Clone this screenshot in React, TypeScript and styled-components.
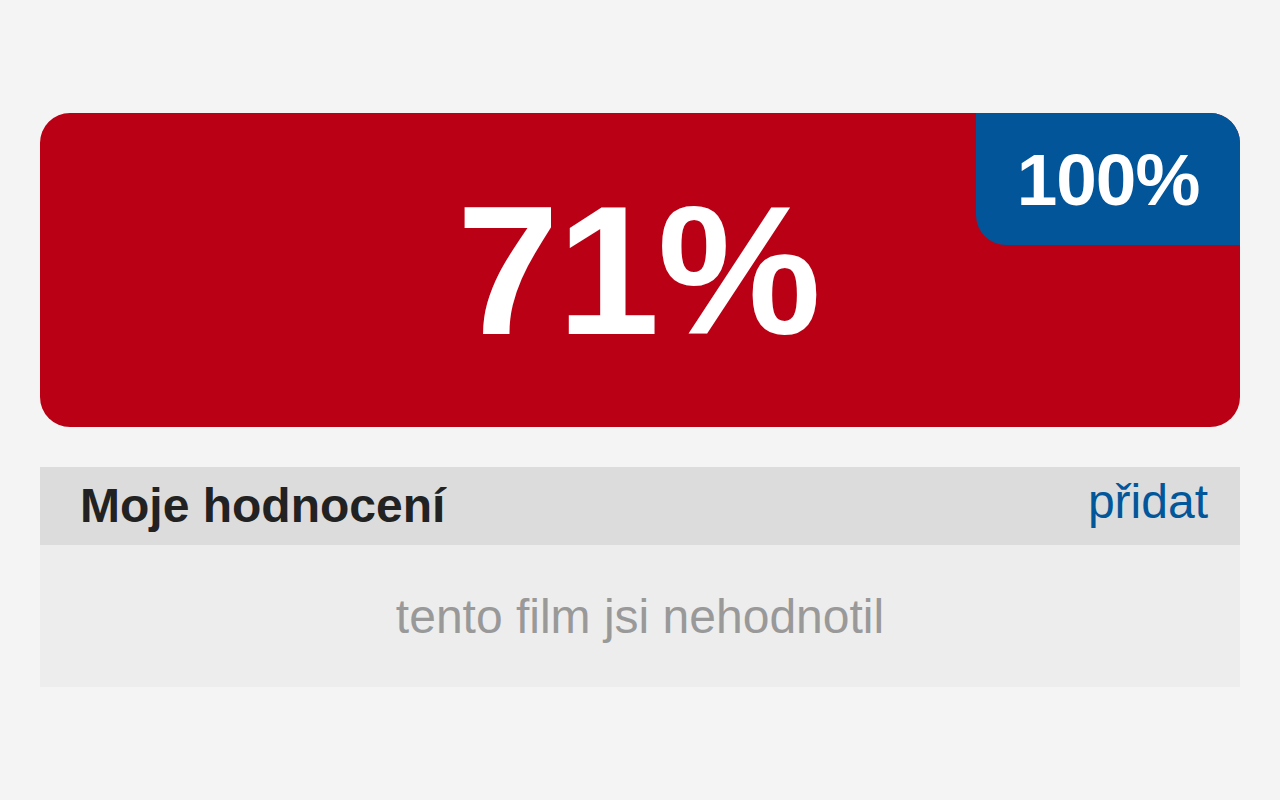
import React from "react";
import styled, { createGlobalStyle } from "styled-components";

const Global = createGlobalStyle`
  html, body { margin: 0; padding: 0; background: #f4f4f4; }
  body { font-family: "Liberation Sans", Arial, sans-serif; }
`;

const Page = styled.div`
  padding: 113px 40px 0;
  display: flex;
  flex-direction: column;
  gap: 40px;
`;

const ScoreCard = styled.div`
  position: relative;
  height: 314px;
  background: #ba0014;
  border-radius: 30px;
  overflow: hidden;
  display: flex;
  align-items: center;
  justify-content: center;
`;

const Score = styled.div`
  color: #fff;
  font-weight: 700;
  font-size: 184px;
  line-height: 1;
  margin-left: -4px;
  letter-spacing: -2px;
`;

const Badge = styled.div`
  position: absolute;
  top: 0;
  right: 0;
  width: 264px;
  height: 132px;
  background: #025598;
  border-bottom-left-radius: 30px;
  display: flex;
  align-items: center;
  justify-content: center;
  color: #fff;
  font-weight: 700;
  font-size: 73px;
  line-height: 1;
  letter-spacing: -1px;
`;

const Rating = styled.section`
  display: flex;
  flex-direction: column;
`;

const RatingHeader = styled.div`
  height: 78px;
  background: #dcdcdc;
  display: flex;
  align-items: center;
  justify-content: space-between;
  padding: 0 32px 0 40px;
`;

const Title = styled.h2`
  margin: 0;
  font-size: 48px;
  font-weight: 700;
  color: #222;
  line-height: 1;
  margin-top: -1px;
`;

const AddLink = styled.a`
  font-size: 48px;
  color: #02569a;
  text-decoration: none;
  line-height: 1;
  margin-top: -8px;
`;

const RatingBody = styled.div`
  height: 142px;
  background: #ededed;
  display: flex;
  align-items: center;
  justify-content: center;
  font-size: 48px;
  color: #999;
`;

export default function App() {
  return (
    <>
      <Global />
      <Page>
        <ScoreCard>
          <Score>71%</Score>
          <Badge>100%</Badge>
        </ScoreCard>
        <Rating>
          <RatingHeader>
            <Title>Moje hodnocení</Title>
            <AddLink href="#">přidat</AddLink>
          </RatingHeader>
          <RatingBody>tento film jsi nehodnotil</RatingBody>
        </Rating>
      </Page>
    </>
  );
}
